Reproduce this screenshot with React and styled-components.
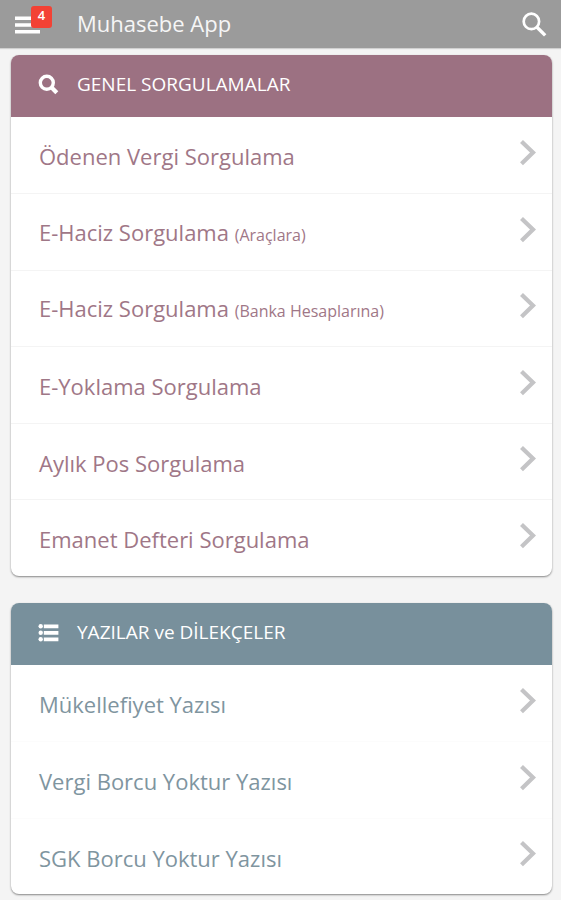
import React from 'react'
import styled, { createGlobalStyle } from 'styled-components'

const GlobalStyle = createGlobalStyle`
    * {
        box-sizing: border-box;
    }
    body {
        margin: 0;
        background-color: #f4f4f4;
        font-family: 'Open Sans', 'Noto Sans', sans-serif;
    }
`

const sections = [
    {
        id: 'genel',
        title: 'GENEL SORGULAMALAR',
        icon: 'search',
        color: '#9c7182',
        textColor: '#9f7787',
        divider: '#f4f4f4',
        items: [
            { name: 'Ödenen Vergi Sorgulama' },
            { name: 'E-Haciz Sorgulama', note: '(Araçlara)' },
            { name: 'E-Haciz Sorgulama', note: '(Banka Hesaplarına)' },
            { name: 'E-Yoklama Sorgulama' },
            { name: 'Aylık Pos Sorgulama' },
            { name: 'Emanet Defteri Sorgulama' },
        ],
    },
    {
        id: 'yazilar',
        title: 'YAZILAR ve DİLEKÇELER',
        icon: 'list',
        color: '#78909c',
        textColor: '#7f959f',
        divider: '#fcfcfc',
        items: [
            { name: 'Mükellefiyet Yazısı' },
            { name: 'Vergi Borcu Yoktur Yazısı' },
            { name: 'SGK Borcu Yoktur Yazısı' },
        ],
    },
]

const AppBar = styled.header`
    display: flex;
    align-items: center;
    height: 48px;
    padding: 0 14px;
    background-color: #9b9b9b;
    color: #fff;
    box-shadow: 0 1px 1px #d0d0d0;
`

const IconButton = styled.button`
    position: relative;
    display: flex;
    padding: 0;
    border: 0;
    background: none;
    color: inherit;
    cursor: pointer;
`

const Badge = styled.span`
    position: absolute;
    top: -8px;
    left: 17px;
    width: 21px;
    height: 22px;
    border-radius: 3px;
    background-color: #f34235;
    font-family: 'Open Sans', sans-serif;
    font-size: 13px;
    font-weight: 600;
    line-height: 18px;
    text-align: center;
`

const AppTitle = styled.h1`
    flex: 1;
    margin: 0;
    padding: 0 0 2px 37px;
    color: #f6f6f6;
    font-size: 22px;
    font-weight: 400;
    line-height: 30px;
`

const Main = styled.main`
    display: flex;
    flex-direction: column;
    gap: 27px;
    padding: 7px 9px 5px 11px;
`

const Card = styled.section`
    border-radius: 8px;
    background-color: #fff;
    box-shadow: 0 1px 2px rgba(0, 0, 0, 0.45);
`

const CardHeader = styled.header`
    display: flex;
    align-items: center;
    gap: 18px;
    height: 62px;
    padding: 0 27px 4px;
    border-radius: 8px 8px 0 0;
    background-color: ${({ $color }) => $color};
    color: #fff;

    h2 {
        margin: 0;
        font-size: 19px;
        font-weight: 400;
    }
`

const Items = styled.ul`
    margin: 0;
    padding: 0;
    list-style-type: none;

    li {
        height: 76px;
    }
    li:nth-child(even) {
        height: 77px;
    }
    li + li {
        border-top: 1px solid ${({ $divider }) => $divider};
    }
`

const ItemLink = styled.a`
    display: flex;
    align-items: center;
    justify-content: space-between;
    height: 100%;
    padding: 0 15px 5px 28px;
    color: ${({ $color }) => $color};
    font-size: 22px;
    font-weight: 400;
    line-height: 30px;
    text-decoration: none;

    span {
        padding-top: 7px;
    }
    small {
        font-size: 16px;
    }
`

function MenuIcon() {
    return (
        <svg width="26" height="20" viewBox="0 0 26 20" fill="currentColor" aria-hidden="true">
            <path d="M1 2.4h25v3.6H1zM1 9.2h25v3.6H1zM1 16h25v3.6H1z" />
        </svg>
    )
}

function AppSearchIcon() {
    return (
        <svg width="26" height="26" viewBox="0 0 26 26" fill="none" stroke="currentColor" aria-hidden="true">
            <circle cx="10.4" cy="10.4" r="7.7" strokeWidth="2.7" />
            <path d="M16 16.2l8.2 8.2" strokeWidth="3.4" />
        </svg>
    )
}

function SectionIcon({ name }) {
    if( 'search' === name ) {
        return (
            <svg width="21" height="21" viewBox="0 0 21 21" fill="none" stroke="currentColor" aria-hidden="true">
                <circle cx="8.8" cy="8.8" r="6.5" strokeWidth="3.4" />
                <path d="M13.6 13.6l5.2 5.2" strokeWidth="4.2" />
            </svg>
        )
    }
    return (
        <svg width="21" height="21" viewBox="0 0 21 21" fill="currentColor" aria-hidden="true">
            <circle cx="2.7" cy="4.3" r="2.2" />
            <circle cx="2.7" cy="10.8" r="2.2" />
            <circle cx="2.7" cy="17.3" r="2.2" />
            <path d="M5.8 2.5h14.6v3.7H5.8zM5.8 9h14.6v3.7H5.8zM5.8 15.5h14.6v3.7H5.8z" />
        </svg>
    )
}

function Chevron() {
    return (
        <svg width="18" height="28" viewBox="0 0 18 28" fill="none" stroke="#c4c4c6" strokeWidth="4.2" aria-hidden="true">
            <path d="M2.5 2.4L14 13.6L2.5 24.8" />
        </svg>
    )
}

function MenuCard({ section }) {
    return (
        <Card aria-labelledby={section.id}>
            <CardHeader $color={section.color}>
                <SectionIcon name={section.icon} />
                <h2 id={section.id}>{section.title}</h2>
            </CardHeader>
            <Items $divider={section.divider}>
                {section.items.map(item => (
                    <li key={item.name + (item.note || '')}>
                        <ItemLink href="#" $color={section.textColor}>
                            <span>
                                {item.name}
                                {item.note && <> <small>{item.note}</small></>}
                            </span>
                            <Chevron />
                        </ItemLink>
                    </li>
                ))}
            </Items>
        </Card>
    )
}

export default function App() {
    return (
        <>
            <GlobalStyle />
            <AppBar>
                <IconButton type="button" aria-label="Menü">
                    <MenuIcon />
                    <Badge>4</Badge>
                </IconButton>
                <AppTitle>Muhasebe App</AppTitle>
                <IconButton type="button" aria-label="Ara">
                    <AppSearchIcon />
                </IconButton>
            </AppBar>
            <Main>
                {sections.map(section => (
                    <MenuCard key={section.id} section={section} />
                ))}
            </Main>
        </>
    )
}
